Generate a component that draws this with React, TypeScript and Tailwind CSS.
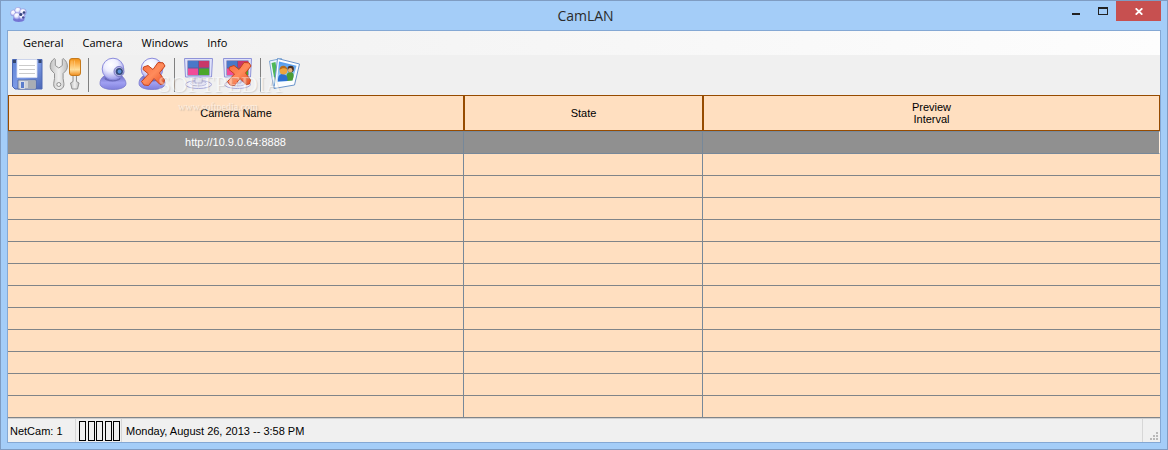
import type { ReactNode } from "react";

const menus = ["General", "Camera", "Windows", "Info"];

const emptyRows = Array.from({ length: 12 }, (_, i) => i);

function Gradients() {
  return (
    <svg className="absolute h-0 w-0" aria-hidden="true">
      <defs>
        <linearGradient id="floppy" x1="0" y1="0" x2="1" y2="1">
          <stop offset="0" stopColor="#5f84d6" />
          <stop offset="0.5" stopColor="#7c9ae6" />
          <stop offset="1" stopColor="#4a66b4" />
        </linearGradient>
        <linearGradient id="steel" x1="0" y1="0" x2="1" y2="0">
          <stop offset="0" stopColor="#c2c2c2" />
          <stop offset="0.5" stopColor="#f0f0f0" />
          <stop offset="1" stopColor="#bdbdbd" />
        </linearGradient>
        <linearGradient id="handle" x1="0" y1="0" x2="0" y2="1">
          <stop offset="0" stopColor="#ef8e12" />
          <stop offset="0.3" stopColor="#fcb04a" />
          <stop offset="0.65" stopColor="#ffdf9c" />
          <stop offset="1" stopColor="#f08c1c" />
        </linearGradient>
        <radialGradient id="ball" cx="0.4" cy="0.3" r="0.7">
          <stop offset="0" stopColor="#ffffff" />
          <stop offset="0.45" stopColor="#eeeefe" />
          <stop offset="1" stopColor="#9a9aea" />
        </radialGradient>
        <linearGradient id="base" x1="0" y1="0" x2="0" y2="1">
          <stop offset="0" stopColor="#7272c8" />
          <stop offset="0.5" stopColor="#a0a0f2" />
          <stop offset="1" stopColor="#7f7fdc" />
        </linearGradient>
        <linearGradient id="cross" x1="0" y1="0" x2="1" y2="1">
          <stop offset="0" stopColor="#f8673a" />
          <stop offset="0.5" stopColor="#ff8c5c" />
          <stop offset="1" stopColor="#e84c20" />
        </linearGradient>
        <linearGradient id="sky" x1="0" y1="0" x2="0" y2="1">
          <stop offset="0" stopColor="#4b97ee" />
          <stop offset="1" stopColor="#b9e3fc" />
        </linearGradient>
      </defs>
    </svg>
  );
}

function Glyph({ children }: { children: ReactNode }) {
  return (
    <svg viewBox="0 0 39 40" className="h-10 w-[39px]" aria-hidden="true">
      {children}
    </svg>
  );
}

function Cross() {
  return (
    <path
      d="M10.500 12 L15 10.500 L20 14.500 L25 7.500 L30 7.800 L32 11 L26.500 18 L31.500 25 L30.500 29 L27 29.500 L21 23.500 L15.500 30.500 L11 30 L8.500 26.500 L15.500 19 L10 14.500 Z"
      fill="url(#cross)"
      stroke="#c4431d"
      strokeWidth="1"
      strokeLinejoin="round"
    />
  );
}

function SaveGlyph() {
  return (
    <Glyph>
      <path d="M4.500 4.500h29.500v29.500h-27l-2.500-2.500z" fill="url(#floppy)" stroke="#4c68b4" />
      <path d="M5 5h3v3h-3zM30.500 5h3v3h-3z" fill="#34466f" />
      <path d="M9 4.500h20v18h-20z" fill="#fff" stroke="#d5dcf0" strokeWidth="0.8" />
      <path d="M11 10.500h16M11 14.500h16M11 18.500h16" stroke="#cbcbcb" />
      <path d="M10 25h18v9h-18z" fill="#cfd2d6" stroke="#54689a" strokeWidth="0.8" />
      <path d="M20 25.500h7.500v8h-7.500z" fill="#a9adb4" />
      <path d="M12.500 26.500h4v7h-4z" fill="#5b7dcc" stroke="#eee" strokeWidth="0.8" />
    </Glyph>
  );
}

function ToolsGlyph() {
  return (
    <Glyph>
      <path
        d="M7.500 3.500c-4 2.500-6 8.500-2.500 12.500l2.500 2.500v5l-.8 5c-.3 3.800 1.800 6 5.100 6s5.400-2.200 5.100-6l-.8-5v-5l2.500-2.500c3.500-4 1.500-10-2.500-12.500l-.8 1v6l-3.500 2.500-3.500-2.500v-6z"
        fill="url(#steel)"
        stroke="#929292"
      />
      <circle cx="11.800" cy="29.500" r="2" fill="#f3f3f3" stroke="#8e8e8e" />
      <path d="M26 20h3.500v6.500l2.500 1.500-1.500 6h-5.500l-1.500-6 2.500-1.500z" fill="url(#steel)" stroke="#929292" />
      <rect x="22.500" y="3.500" width="11" height="17" rx="2.500" fill="url(#handle)" stroke="#c67a1c" />
      <path d="M25 5.500v12M27.500 5.500v10" stroke="#ffd28a" strokeWidth="0.8" opacity="0.7" />
    </Glyph>
  );
}

function WebcamBody({ lens = false }: { lens?: boolean }) {
  return (
    <>
      <path
        d="M10 21c-3 2-4 5-4 7.500 0 4 6 6 13 6s13-2 13-6c0-2.500-2-5.500-4-7.500z"
        fill="url(#base)"
        stroke="#7878cc"
        strokeWidth="0.8"
      />
      <ellipse cx="18.500" cy="23.500" rx="8" ry="3" fill="#6868ba" />
      <circle cx="19" cy="14" r="10.800" fill="url(#ball)" stroke="#8c8cdc" />
      {lens && (
        <>
          <circle cx="25" cy="16.500" r="5" fill="#b5b5e6" stroke="#7a7ac4" />
          <circle cx="25.300" cy="16.500" r="3.600" fill="#344a78" />
          <circle cx="25.500" cy="16.500" r="1.900" fill="#5b93d8" />
        </>
      )}
    </>
  );
}

function WebcamGlyph() {
  return (
    <Glyph>
      <WebcamBody lens />
    </Glyph>
  );
}

function WebcamRemoveGlyph() {
  return (
    <Glyph>
      <WebcamBody />
      <Cross />
    </Glyph>
  );
}

function MonitorBody() {
  return (
    <>
      <ellipse cx="18.500" cy="29.500" rx="13" ry="4" fill="#f1f1fa" stroke="#a6a6d8" />
      <ellipse cx="18.500" cy="28.500" rx="8" ry="2.500" fill="#e4e4f2" stroke="#b2b2da" strokeWidth="0.8" />
      <path d="M15 22h7v6h-7z" fill="#e6e6f0" stroke="#a4a4cc" strokeWidth="0.8" />
      <path d="M4.500 3.500h28l-1 18.500h-26z" fill="#dfe2fa" stroke="#8f93d8" />
      <path d="M7.500 5.500h22v15h-22z" fill="#5a5c9c" />
      <path d="M8 6h10v6.500h-10z" fill="#4a78c8" />
      <path d="M19 6h10v6.500h-10z" fill="#c83868" />
      <path d="M8 13.500h10v6.500h-10z" fill="#f04c98" />
      <path d="M19 13.500h10v6.500h-10z" fill="#4ba72a" />
    </>
  );
}

function MonitorGlyph() {
  return (
    <Glyph>
      <MonitorBody />
    </Glyph>
  );
}

function MonitorRemoveGlyph() {
  return (
    <Glyph>
      <MonitorBody />
      <Cross />
    </Glyph>
  );
}

function PhotosGlyph() {
  return (
    <Glyph>
      <path d="M3.500 6l12-2.500 6 26-14 2.500z" fill="#eef6ff" stroke="#7ea6d4" />
      <path d="M5.500 8l4-1 3 20-3.500 1z" fill="#4fb857" />
      <path d="M11.500 3.500l22 5.500-5 21-20.500 3.500z" fill="#fbfdff" stroke="#6b95cb" />
      <path d="M13 6.500l17.500 4.200-4 14.800-15.500 1.500z" fill="url(#sky)" />
      <path d="M20 22.500c.5-4 2-5.500 4.500-5.500s3.500 2 3 5l-1 3.500-5.500.5z" fill="#4a9c34" />
      <circle cx="24.700" cy="14" r="3.200" fill="#4b3022" />
      <circle cx="24.200" cy="15.300" r="2.200" fill="#e2ae78" />
      <path d="M12 26.500c-.4-5.500 1.500-7.500 4.500-7.500s5.500 2 5 7z" fill="#2e6ed0" />
      <circle cx="17.500" cy="15.500" r="3.900" fill="#efa43e" />
      <path d="M13.500 15c.3-3.700 2.500-4.700 4.500-4.200 2 .5 3.200 2 3.200 3.700-2-1.500-5-2-7.700.5z" fill="#b56b1c" />
    </Glyph>
  );
}

function AppIcon() {
  return (
    <svg viewBox="0 0 17 16" className="h-4 w-[17px]" aria-hidden="true">
      <path d="M4 9h9l1.500 4c-1.500 2.500-10 2.500-11.500 0z" fill="#7474d4" />
      <circle cx="3.500" cy="6" r="3" fill="url(#ball)" stroke="#8787d6" strokeWidth="0.5" />
      <circle cx="8" cy="3.500" r="3.200" fill="url(#ball)" stroke="#8787d6" strokeWidth="0.5" />
      <circle cx="13" cy="5" r="3.300" fill="url(#ball)" stroke="#8787d6" strokeWidth="0.5" />
      <circle cx="7" cy="9" r="3.300" fill="url(#ball)" stroke="#8787d6" strokeWidth="0.5" />
      <circle cx="12" cy="9.500" r="3" fill="url(#ball)" stroke="#8787d6" strokeWidth="0.5" />
      <circle cx="14" cy="5.500" r="1.300" fill="#34447c" />
      <circle cx="10.800" cy="7.500" r="1.500" fill="#34447c" />
      <circle cx="13.200" cy="10.500" r="1.200" fill="#46509c" />
    </svg>
  );
}

function ToolButton({ label, children }: { label: string; children: ReactNode }) {
  return (
    <button type="button" aria-label={label} className="h-10 w-[39px]">
      {children}
    </button>
  );
}

function ToolDivider() {
  return (
    <div className="h-10 w-2 py-[3px] pl-[2px]">
      <div className="h-full w-px bg-[#808080]" />
    </div>
  );
}

function TitleBar() {
  return (
    <header className="flex h-[29px] items-start">
      <div className="flex flex-1 pt-1.5 pl-[9px]">
        <AppIcon />
      </div>
      <h1 className="font-['Open_Sans','Noto_Sans',sans-serif] text-[14px] leading-[29px] text-[#2b2b2b]">CamLAN</h1>
      <div className="flex flex-1 justify-end pr-1.5">
        <button type="button" aria-label="Minimize" className="flex h-5 w-[27px] justify-center pt-3">
          <span className="h-[2px] w-2 bg-[#222]" />
        </button>
        <button type="button" aria-label="Maximize" className="flex h-5 w-[27px] justify-center pt-1.5">
          <span className="h-2 w-2.5 border border-t-2 border-[#222]" />
        </button>
        <button type="button" aria-label="Close" className="flex h-5 w-[45px] items-center justify-center bg-[#c75050]">
          <svg viewBox="0 0 8 7" className="h-[7px] w-2" aria-hidden="true">
            <path d="M0.700 0.300l6.600 6.400M7.300 0.300l-6.600 6.400" stroke="#fff" strokeWidth="1.800" />
          </svg>
        </button>
      </div>
    </header>
  );
}

function CameraTable() {
  const head = "h-9 border border-[#964B00] p-0 align-middle font-normal leading-3";
  const line = "h-[22px] border-b border-[#808488] p-0";
  const picked = "h-[23px] border-y border-[#778899] bg-[#909090] p-0 text-center leading-[21px]";
  return (
    <table className="w-full table-fixed border-separate border-spacing-0 bg-[#ffdfc0] text-[11px] text-black">
      <colgroup>
        <col className="w-[456px]" />
        <col className="w-[239px]" />
        <col />
      </colgroup>
      <thead>
        <tr>
          <th className={head}>Camera Name</th>
          <th className={head}>State</th>
          <th className={head}>
            Preview
            <br />
            Interval
          </th>
        </tr>
      </thead>
      <tbody>
        <tr className="text-white">
          <td className={`${picked} border-r`}>http://10.9.0.64:8888</td>
          <td className={`${picked} border-r`} />
          <td className={`${picked} border-r border-r-[#ffeede]`} />
        </tr>
        {emptyRows.map((row) => (
          <tr key={row}>
            <td className={`${line} border-r border-r-[#778899]`} />
            <td className={`${line} border-r border-r-[#778899]`} />
            <td className={line} />
          </tr>
        ))}
      </tbody>
    </table>
  );
}

function StatusBar() {
  return (
    <footer className="flex h-6 border-t border-[#d0d0d0] bg-[#f0f0f0] text-[11px] leading-6 text-black">
      <div className="w-[68px] border-r border-[#d7d7d7] pl-0.5">NetCam: 1</div>
      <div className="flex w-[46px] justify-between border-r border-[#d7d7d7] pt-0.5 pr-px pl-[3px]">
        <span className="h-5 w-[7px] border border-black" />
        <span className="h-5 w-[7px] border border-black" />
        <span className="h-5 w-[7px] border border-black" />
        <span className="h-5 w-[7px] border border-black" />
        <span className="h-5 w-[7px] border border-black" />
      </div>
      <div className="flex-1 border-r border-[#d7d7d7] pl-1">Monday, August 26, 2013 -- 3:58 PM</div>
      <div className="flex w-[17px] items-end justify-end pr-0.5 pb-0.5">
        <svg viewBox="0 0 8 8" className="h-2 w-2" aria-hidden="true">
          <path d="M6 0h2v2h-2zM3 3h2v2h-2zM6 3h2v2h-2zM0 6h2v2h-2zM3 6h2v2h-2zM6 6h2v2h-2z" fill="#b8b8b8" />
        </svg>
      </div>
    </footer>
  );
}

export default function App() {
  return (
    <div className="border border-[#7f9cc2] bg-[#a4cdf8] font-['Liberation_Sans',Arial,sans-serif]">
      <Gradients />
      <TitleBar />
      <main className="relative mx-1.5 mb-1.5 border border-[#84a8d4] bg-[#f0f0f0]">
        <nav className="flex h-6 gap-[19px] bg-linear-to-r from-[#f0f0f0] to-[#fdfdfd] pl-[15px] font-['Open_Sans','Noto_Sans',sans-serif] text-[11px] leading-6 text-black">
          {menus.map((menu) => (
            <button type="button" key={menu}>
              {menu}
            </button>
          ))}
        </nav>
        <div role="toolbar" aria-label="Camera tools" className="flex h-10">
          <ToolButton label="Save">
            <SaveGlyph />
          </ToolButton>
          <ToolButton label="Settings">
            <ToolsGlyph />
          </ToolButton>
          <ToolDivider />
          <ToolButton label="Add camera">
            <WebcamGlyph />
          </ToolButton>
          <ToolButton label="Remove camera">
            <WebcamRemoveGlyph />
          </ToolButton>
          <ToolDivider />
          <ToolButton label="Show windows">
            <MonitorGlyph />
          </ToolButton>
          <ToolButton label="Close windows">
            <MonitorRemoveGlyph />
          </ToolButton>
          <ToolDivider />
          <ToolButton label="Pictures">
            <PhotosGlyph />
          </ToolButton>
        </div>
        <CameraTable />
        <div className="pointer-events-none absolute top-10 left-[150px] font-['Liberation_Serif',serif] text-white">
          <div className="text-[23px] leading-7 opacity-40 [text-shadow:1px_1px_1px_#aaa]">SOFTPEDIA</div>
          <div className="pl-5 text-[10px] leading-4 opacity-50 [text-shadow:1px_1px_1px_#999]">www.softpedia.com</div>
        </div>
        <StatusBar />
      </main>
    </div>
  );
}
